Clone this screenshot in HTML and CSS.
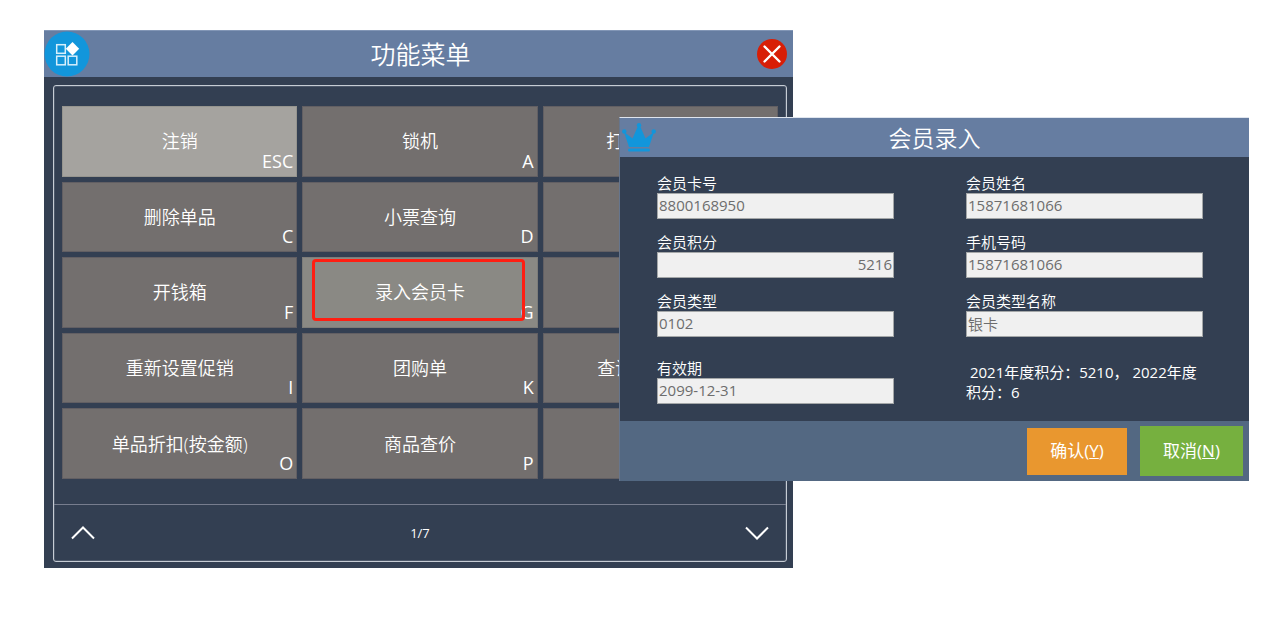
FILE: index.html
```html
<!DOCTYPE html>
<html lang="zh-CN">
<head>
<meta charset="utf-8">
<meta name="viewport" content="width=device-width, initial-scale=1">
<title>功能菜单</title>
<link rel="stylesheet" href="styles.css">
</head>
<body>
<main class="desktop">
  <section class="menu">
    <header class="menu-header">
      <span class="menu-logo">
        <svg viewBox="0 0 46 46" width="46" height="46" aria-hidden="true">
          <circle cx="23" cy="23" r="22.5" fill="#1296db"/>
          <g fill="none" stroke="#d8effb" stroke-width="1.5">
            <rect x="12.7" y="13.7" width="8.6" height="8.6"/>
            <rect x="12.7" y="25.2" width="8.6" height="8.6"/>
            <rect x="24.2" y="25.2" width="8.6" height="8.6"/>
          </g>
          <path d="M28.500 11 35.200 17.700 28.500 24.400 21.800 17.700Z" fill="#fff"/>
        </svg>
      </span>
      <h1 class="menu-title">功能菜单</h1>
      <button class="close" type="button" aria-label="关闭">
        <svg viewBox="0 0 30 30" width="30" height="30" aria-hidden="true">
          <circle cx="15" cy="15" r="15" fill="#d81e06"/>
          <path d="M7.5 7.5 22.5 22.5M22.5 7.5 7.5 22.5" stroke="#fff" stroke-width="2.4" stroke-linecap="round"/>
        </svg>
      </button>
    </header>
    <div class="menu-body">
      <div class="panel">
        <div class="tiles">
          <button class="tile tile-light" type="button"><span>注销</span><kbd>ESC</kbd></button>
          <button class="tile" type="button"><span>锁机</span><kbd>A</kbd></button>
          <button class="tile" type="button"><span class="span-six">打</span></button>
          <button class="tile" type="button"><span>删除单品</span><kbd>C</kbd></button>
          <button class="tile" type="button"><span>小票查询</span><kbd>D</kbd></button>
          <button class="tile" type="button"></button>
          <button class="tile" type="button"><span>开钱箱</span><kbd>F</kbd></button>
          <button class="tile tile-active" type="button"><span>录入会员卡</span><kbd>G</kbd></button>
          <button class="tile" type="button"></button>
          <button class="tile" type="button"><span>重新设置促销</span><kbd>I</kbd></button>
          <button class="tile" type="button"><span>团购单</span><kbd>K</kbd></button>
          <button class="tile" type="button"><span class="span-seven">查询</span></button>
          <button class="tile" type="button"><span>单品折扣(按金额)</span><kbd>O</kbd></button>
          <button class="tile" type="button"><span>商品查价</span><kbd>P</kbd></button>
          <button class="tile" type="button"></button>
        </div>
        <footer class="pager">
          <button class="page-button" type="button" aria-label="上一页">
            <svg viewBox="0 0 24 14" width="24" height="14" aria-hidden="true"><path d="M1 12.5 12 1.5 23 12.5"/></svg>
          </button>
          <span class="page-number">1/7</span>
          <button class="page-button" type="button" aria-label="下一页">
            <svg viewBox="0 0 24 14" width="24" height="14" aria-hidden="true"><path d="M1 1.5 12 12.5 23 1.5"/></svg>
          </button>
        </footer>
      </div>
    </div>
  </section>

  <form class="dialog">
    <header class="dialog-header">
      <svg class="crown" viewBox="0 0 34 30" width="34" height="30" aria-hidden="true">
        <g fill="#1296db">
          <circle cx="2.3" cy="8.5" r="2.2"/>
          <circle cx="17" cy="2.3" r="2.2"/>
          <circle cx="31.7" cy="8.5" r="2.2"/>
          <path d="M2 9 10.5 15.5 16 3H18L23.500 15.500 32 9 27 24H7Z"/>
          <rect x="6" y="25.500" width="22" height="3" rx="1.500"/>
        </g>
      </svg>
      <h2 class="dialog-title">会员录入</h2>
    </header>
    <div class="fields">
      <div class="field"><label for="card">会员卡号</label><input id="card" value="8800168950" readonly></div>
      <div class="field"><label for="name">会员姓名</label><input id="name" value="15871681066" readonly></div>
      <div class="field"><label for="points">会员积分</label><input id="points" class="number" value="5216" readonly></div>
      <div class="field"><label for="phone">手机号码</label><input id="phone" value="15871681066" readonly></div>
      <div class="field"><label for="type">会员类型</label><input id="type" value="0102" readonly></div>
      <div class="field"><label for="type-name">会员类型名称</label><input id="type-name" class="light" value="银卡" readonly></div>
      <div class="field field-last"><label for="expiry">有效期</label><input id="expiry" value="2099-12-31" readonly></div>
      <p class="note">&nbsp;2021年度积分：5210， 2022年度积分：6</p>
    </div>
    <footer class="actions">
      <button class="action confirm" type="button">确认(<u>Y</u>)</button>
      <button class="action cancel" type="button">取消(<u>N</u>)</button>
    </footer>
  </form>
</main>
</body>
</html>
```
FILE: styles.css
```css
* {
  box-sizing: border-box;
}

body {
  margin: 0;
  background: #fff;
  color: #fff;
  font-family: "Open Sans", "Noto Sans CJK SC", sans-serif;
  font-size: 15px;
  line-height: 20px;
}

button,
input,
kbd {
  font: inherit;
  color: inherit;
}

button {
  margin: 0;
  padding: 0;
  border: 0;
  background: none;
}

h1,
h2,
p {
  margin: 0;
  font-weight: 350;
}

svg {
  display: block;
}

.desktop {
  display: grid;
  grid-template-columns: 575fr 174fr 456fr;
  align-items: start;
  padding: 30px 21px 30px 44px;
}

/* Menu window */
.menu {
  grid-area: 1 / 1 / 2 / 3;
  background: #333f52;
}

.menu-header {
  display: grid;
  grid-template-columns: 1fr auto 1fr;
  align-items: center;
  height: 47px;
  background: #667da1;
  border-top: 1px solid #8296b6;
}

.menu-title {
  padding-left: 4px;
  font-size: 25px;
  line-height: 36px;
}

.close {
  justify-self: end;
  margin-right: 6px;
}

.menu-body {
  padding: 8px 6px 6px 9px;
}

.panel {
  border: 1px solid #c6ccd4;
  border-radius: 3px;
  box-shadow: inset 0 0 0 1px #4d586a;
}

.tiles {
  display: grid;
  grid-template-columns: repeat(3, 1fr);
  grid-auto-rows: 1fr;
  gap: 5px;
  min-height: 418px;
  padding: 20px 8px 25px 8px;
}

.tile {
  position: relative;
  display: flex;
  align-items: center;
  justify-content: center;
  background: #736f6e;
  border: 1px solid #625f63;
  font-size: 18px;
  font-weight: 350;
  line-height: 24px;
}

.tile-light {
  background: #a5a39f;
  border-color: #96958f;
}

.tile-active {
  background: #8a8984;
  border-color: #7d7c79;
}

.tile kbd {
  position: absolute;
  right: 3px;
  bottom: 3px;
  font-weight: 400;
}

.tile-active::after {
  content: "";
  position: absolute;
  inset: 1px 12px 6px 9px;
  border: 3px solid #ff1e12;
  border-radius: 4px;
}

.span-six,
.span-seven {
  width: 108px;
  text-align: left;
}

.span-seven {
  width: 126px;
}

.pager {
  display: flex;
  align-items: center;
  justify-content: space-between;
  height: 57px;
  padding: 0 17px;
  border-top: 1px solid #777d8e;
}

.page-button path {
  fill: none;
  stroke: #fff;
  stroke-width: 2;
}

.page-number {
  font-size: 13px;
}

/* Member dialog */
.dialog {
  grid-area: 1 / 2 / 2 / 4;
  z-index: 1;
  margin-top: 87px;
  background: #333f52;
  border-top: 1px solid #dfe5ee;
  border-left: 1px solid #66758c;
}

.dialog-header {
  display: grid;
  grid-template-columns: 1fr auto 1fr;
  align-items: center;
  height: 39px;
  padding: 0 2px;
  background: #667da1;
}

.dialog-title {
  font-size: 23px;
  line-height: 34px;
}

.fields {
  display: grid;
  grid-template-columns: 1fr 1fr;
  gap: 13px 72px;
  padding: 16px 46px 17px 37px;
}

.field {
  display: flex;
  flex-direction: column;
  font-weight: 350;
}

.field-last {
  margin-top: 8px;
}

.field input {
  width: 100%;
  height: 26px;
  margin: 0;
  padding: 0 1px 2px;
  border: 1px solid #a4a7a8;
  border-radius: 0;
  background: #f0f0f0;
  color: #6d6d6d;
  font-weight: 400;
}

.field .number {
  text-align: right;
}

.field .light {
  font-weight: 350;
}

.note {
  padding-top: 12px;
  font-weight: 400;
}

.actions {
  display: flex;
  align-items: center;
  justify-content: flex-end;
  gap: 13px;
  height: 60px;
  padding-right: 6px;
  background: #536882;
}

.action {
  min-width: 100px;
  height: 47px;
  font-size: 17px;
  font-weight: 400;
}

.confirm {
  background: #e9972f;
}

.cancel {
  min-width: 103px;
  height: 50px;
  background: #76b03f;
}
```
